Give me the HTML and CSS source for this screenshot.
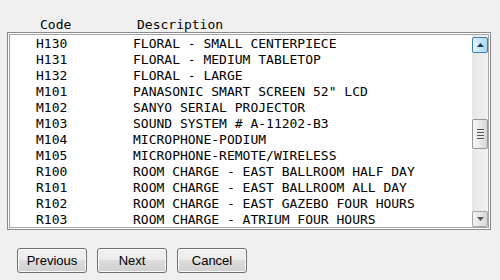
FILE: index.html
```html
<!DOCTYPE html>
<html lang="en">
<head>
    <meta charset="UTF-8">
    <title>Select Item</title>
    <link rel="stylesheet" href="styles.css">
</head>
<body>
    <div class="panel">
        <!-- Column headers -->
        <div class="header">
            <span>Code</span>
            <span>Description</span>
        </div>

        <!-- Item list -->
        <div class="listbox">
            <div class="listbox-inner">
                <div class="rows">
                    <div class="row"><span>H130</span><span>FLORAL - SMALL CENTERPIECE</span></div>
                    <div class="row"><span>H131</span><span>FLORAL - MEDIUM TABLETOP</span></div>
                    <div class="row"><span>H132</span><span>FLORAL - LARGE</span></div>
                    <div class="row"><span>M101</span><span>PANASONIC SMART SCREEN 52" LCD</span></div>
                    <div class="row"><span>M102</span><span>SANYO SERIAL PROJECTOR</span></div>
                    <div class="row"><span>M103</span><span>SOUND SYSTEM # A-11202-B3</span></div>
                    <div class="row"><span>M104</span><span>MICROPHONE-PODIUM</span></div>
                    <div class="row"><span>M105</span><span>MICROPHONE-REMOTE/WIRELESS</span></div>
                    <div class="row"><span>R100</span><span>ROOM CHARGE - EAST BALLROOM HALF DAY</span></div>
                    <div class="row"><span>R101</span><span>ROOM CHARGE - EAST BALLROOM ALL DAY</span></div>
                    <div class="row"><span>R102</span><span>ROOM CHARGE - EAST GAZEBO FOUR HOURS</span></div>
                    <div class="row"><span>R103</span><span>ROOM CHARGE - ATRIUM FOUR HOURS</span></div>
                </div>

                <!-- Scrollbar -->
                <div class="scrollbar">
                    <div class="arrow arrow-up hover">
                        <svg width="7" height="4" viewBox="0 0 7 4"><path d="M0 4 L3.5 0 L7 4 Z" fill="#1f3a55"/></svg>
                    </div>
                    <div class="track">
                        <div class="thumb">
                            <span class="grip"></span>
                            <span class="grip"></span>
                            <span class="grip"></span>
                            <span class="grip"></span>
                        </div>
                    </div>
                    <div class="arrow arrow-down">
                        <svg width="7" height="4" viewBox="0 0 7 4"><path d="M0 0 L7 0 L3.5 4 Z" fill="#555"/></svg>
                    </div>
                </div>
            </div>
        </div>

        <!-- Buttons -->
        <div class="buttons">
            <button type="button">Previous</button>
            <button type="button">Next</button>
            <button type="button">Cancel</button>
        </div>
    </div>
</body>
</html>
```

FILE: styles.css
```css
body {
    margin: 0;
    background-color: #f0f0f0;
    width: 500px;
    height: 280px;
    overflow: hidden;
}
.panel {
    padding: 18px 0 0 7px;
}
.header {
    display: grid;
    grid-template-columns: 97px auto;
    padding-left: 33px;
    height: 14px;
    font-family: "DejaVu Sans Mono", monospace;
    font-size: 13px;
    line-height: 14px;
    color: #000;
}
.listbox {
    box-sizing: border-box;
    width: 484px;
    height: 198px;
    border: 1px solid #8a8a8a;
    padding: 1px;
    background-color: #fff;
}
.listbox-inner {
    box-sizing: border-box;
    height: 100%;
    border: 1px solid #a5a5a5;
    display: flex;
}
.rows {
    flex: 1;
    overflow: hidden;
    padding-top: 1px;
}
.row {
    display: grid;
    grid-template-columns: 97px auto;
    padding-left: 26px;
    font-family: "DejaVu Sans Mono", monospace;
    font-size: 13px;
    line-height: 16px;
    height: 16px;
    color: #000;
    white-space: pre;
}
.scrollbar {
    width: 16px;
    display: flex;
    flex-direction: column;
    padding: 2px 0 0 0;
    background: linear-gradient(to right, #e6e6e6, #f2f2f2);
}
.arrow {
    box-sizing: border-box;
    height: 16px;
    border: 1px solid #a7a7a7;
    border-radius: 2px;
    background: linear-gradient(to right, #f4f4f4, #e6e6e6 50%, #d8d8d8);
    display: flex;
    align-items: center;
    justify-content: center;
}
.arrow.hover {
    border-color: #3c7fb1;
    background: linear-gradient(to right, #e8f6fd, #c4e5f6 50%, #a9d9f2);
}
.track {
    flex: 1;
    display: flex;
    flex-direction: column;
    justify-content: center;
    padding-top: 4px;
}
.thumb {
    box-sizing: border-box;
    height: 30px;
    border: 1px solid #979797;
    border-radius: 2px;
    background: linear-gradient(to right, #f6f6f6, #e9e9e9 50%, #d6d6d6);
    display: flex;
    flex-direction: column;
    align-items: center;
    justify-content: center;
    gap: 1px;
}
.grip {
    width: 7px;
    height: 1px;
    background-color: #555;
    border-bottom: 1px solid #eee;
}
.buttons {
    display: flex;
    gap: 10px;
    margin: 18px 0 0 10px;
}
button {
    width: 70px;
    height: 25px;
    padding: 0;
    border: 1px solid #707070;
    border-radius: 3px;
    background: linear-gradient(#f2f2f2 0%, #ebebeb 50%, #dddddd 50%, #cfcfcf 100%);
    box-shadow: inset 0 0 0 1px #fbfbfb;
    font-family: "Liberation Sans", Arial, sans-serif;
    font-size: 13px;
    color: #000;
}
```
